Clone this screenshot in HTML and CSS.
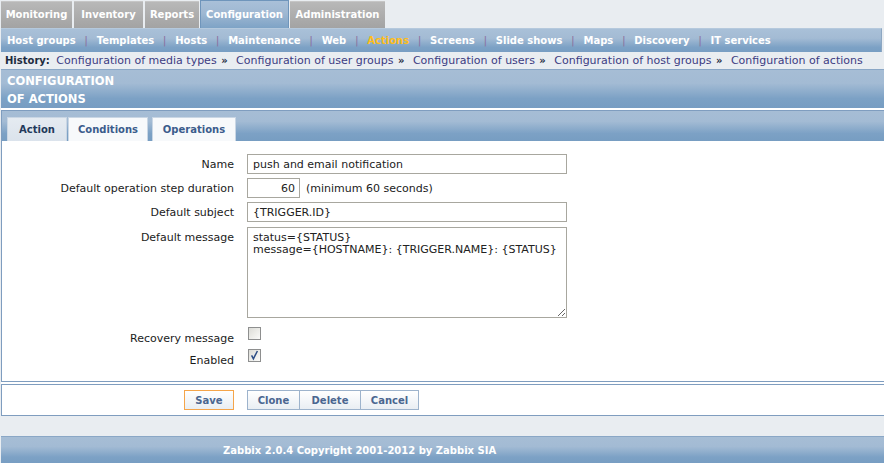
FILE: index.html
```html
<!DOCTYPE html>
<html>
<head>
<meta charset="utf-8">
<title>Configuration of actions</title>
<link rel="stylesheet" href="styles.css">
</head>
<body>
<div class="page">
  <div class="topnav">
    <span class="tab w1">Monitoring</span>
    <span class="tab w2">Inventory</span>
    <span class="tab w3">Reports</span>
    <span class="tab sel w4">Configuration</span>
    <span class="tab w5">Administration</span>
  </div>
  <div class="subnav">
    <span class="item">Host groups</span><span class="sep">|</span>
    <span class="item">Templates</span><span class="sep">|</span>
    <span class="item">Hosts</span><span class="sep">|</span>
    <span class="item">Maintenance</span><span class="sep">|</span>
    <span class="item">Web</span><span class="sep">|</span>
    <span class="item current">Actions</span><span class="sep">|</span>
    <span class="item">Screens</span><span class="sep">|</span>
    <span class="item">Slide shows</span><span class="sep">|</span>
    <span class="item">Maps</span><span class="sep">|</span>
    <span class="item">Discovery</span><span class="sep">|</span>
    <span class="item">IT services</span>
  </div>
  <div class="history">
    <b class="hlabel">History:</b>
    <a class="hlink">Configuration of media types</a><span class="raquo">»</span>
    <a class="hlink">Configuration of user groups</a><span class="raquo">»</span>
    <a class="hlink">Configuration of users</a><span class="raquo">»</span>
    <a class="hlink">Configuration of host groups</a><span class="raquo">»</span>
    <a class="hlink">Configuration of actions</a>
  </div>

  <div class="panel">
    <div class="header">CONFIGURATION<br>OF ACTIONS</div>

    <div class="formbox">
      <div class="tabbar">
        <span class="ftab active t1">Action</span>
        <span class="ftab t2">Conditions</span>
        <span class="ftab t3">Operations</span>
      </div>
      <div class="form">
        <div class="row">
          <div class="label">Name</div>
          <div class="field"><input class="txt wide" type="text" value="push and email notification"></div>
        </div>
        <div class="row">
          <div class="label">Default operation step duration</div>
          <div class="field"><input class="txt short" type="text" value="60"><span class="hint">(minimum 60 seconds)</span></div>
        </div>
        <div class="row">
          <div class="label">Default subject</div>
          <div class="field"><input class="txt wide" type="text" value="{TRIGGER.ID}"></div>
        </div>
        <div class="row top">
          <div class="label">Default message</div>
          <div class="field"><textarea class="area">status={STATUS}
message={HOSTNAME}: {TRIGGER.NAME}: {STATUS}</textarea></div>
        </div>
        <div class="row check">
          <div class="label">Recovery message</div>
          <div class="field"><span class="cb"></span></div>
        </div>
        <div class="row check">
          <div class="label">Enabled</div>
          <div class="field"><span class="cb on"><svg width="11" height="11" viewBox="0 0 11 11"><path d="M2.6 5.4 L4.4 8.8 L8.4 1" fill="none" stroke="#2b4c85" stroke-width="1.5"/></svg></span></div>
        </div>
      </div>
    </div>

    <div class="buttons">
      <div class="bleft"><button class="btn save">Save</button></div>
      <div class="bright">
        <button class="btn grp b1">Clone</button><button class="btn grp b2">Delete</button><button class="btn grp b3">Cancel</button>
      </div>
    </div>
  </div>

  <div class="footer">Zabbix 2.0.4 Copyright 2001-2012 by Zabbix SIA</div>
</div>
</body>
</html>
```

FILE: styles.css
```css
* { box-sizing: border-box; }
html, body { margin: 0; padding: 0; }
body {
  background: #e9edf1;
  font-family: "DejaVu Sans", sans-serif;
  font-size: 11px;
  color: #1b1b1b;
  width: 884px;
  height: 463px;
  overflow: hidden;
}
.page { width: 900px; padding-left: 1px; }

/* top tabs */
.topnav { display: flex; gap: 2px; height: 28px; padding-top: 1px; }
.tab {
  height: 27px;
  line-height: 26px;
  padding: 0;
  text-align: center;
  font-size: 10px;
  font-weight: bold;
  color: #fff;
  background: linear-gradient(#b8b8b8, #a3a3a3);
  border-top: 1px solid #c6c6c6;
}
.w1 { width: 71px; }
.w2 { width: 69px; }
.w3 { width: 54px; }
.w4 { width: 89px; margin-left: -1px; }
.w5 { width: 95px; margin-left: -1px; }
.tab.sel {
  margin-top: -1px;
  height: 28px;
  line-height: 27px;
  border: 1px solid #6f95bb;
  border-bottom: none;
  background: linear-gradient(#a9c0d8 0%, #9fb8d2 45%, #7ea3c6 100%);
}

/* sub navigation */
.subnav {
  width: 881px;
  height: 24px;
  display: flex;
  align-items: center;
  padding-left: 6px;
  background: linear-gradient(#a9c0d8 0%, #a3bbd4 40%, #7ca1c5 80%, #789ec3 100%);
  border-top: 1px solid #b5c9dd;
  border-right: 1px solid #8da7c2;
}
.item { font-size: 10px; font-weight: bold; color: #fff; white-space: nowrap; }
.item.current { color: #ffbe1a; }
.sep {
  display: inline-block;
  width: 21px;
  text-align: center;
  color: #8b72a0;
  font-size: 11px;
}

/* history */
.history {
  height: 17px;
  line-height: 17px;
  padding-left: 4px;
  white-space: nowrap;
  color: #3c3c80;
}
.hlabel { font-size: 10px; color: #1d2b3f; margin-right: 3px; }
.hlink { color: #3c3c82; }
.raquo { color: #1d2b3f; font-weight: bold; font-size: 10px; margin: 0 5px 0 4.5px; }

/* panel */
.panel {
  background: #fff;
  display: flex;
  flex-direction: column;
  gap: 2px;
}
.header {
  height: 39px;
  padding: 2px 6px 0;
  border-top: 1px solid #8aa7c6;
  background: linear-gradient(#a6bdd5 0%, #a3bbd4 35%, #7ca1c5 75%, #779dc2 100%);
  color: #fff;
  font-size: 11.5px;
  font-weight: bold;
  line-height: 18px;
}
.formbox { border: 1px solid #7f9dbf; border-right: none; }
.tabbar {
  height: 30px;
  display: flex;
  align-items: flex-end;
  padding-left: 5px;
  background: linear-gradient(#a6bdd5 0%, #a3bbd4 35%, #7ca1c5 75%, #779dc2 100%);
}
.ftab {
  height: 24px;
  line-height: 24px;
  padding: 0;
  text-align: center;
  font-size: 10px;
  font-weight: bold;
  color: #3b5c8c;
  background: #f7f9fb;
  border: 1px solid #c9d6e4;
  border-bottom: none;
}
.ftab.active { background: linear-gradient(#e5ebf1, #dbe3ec); color: #22395a; }
.t1 { width: 60px; }
.t2 { width: 80px; margin-left: 1px; }
.t3 { width: 84px; margin-left: 4px; }

.form { padding: 13px 0 10px; display: flex; flex-direction: column; gap: 4px; }
.row { display: grid; grid-template-columns: 232px 320px; column-gap: 13px; align-items: center; }
.row.top { align-items: start; margin-top: 1px; }
.row.top .label { padding-top: 4px; }
.row.check { height: 22px; }
.row.check + .row.check { margin-top: -4px; }
.row.check .field { align-self: start; }
.label { text-align: right; white-space: nowrap; }
.field { display: flex; align-items: center; }
.txt {
  height: 20px;
  border: 1px solid #a8a79f;
  padding: 0 5px;
  font-family: "DejaVu Sans", sans-serif;
  font-size: 11px;
  color: #222;
  background: #fff;
  outline: none;
}
.txt.wide { width: 320px; }
.txt.short { width: 53px; text-align: right; padding-right: 4px; }
.hint { margin-left: 6px; white-space: nowrap; }
.area {
  width: 320px;
  height: 91px;
  border: 1px solid #a8a79f;
  padding: 4px 5px;
  font-family: "DejaVu Sans", sans-serif;
  font-size: 11px;
  line-height: 12px;
  color: #222;
  resize: both;
  outline: none;
  display: block;
  margin-bottom: 5px;
}
.cb {
  display: inline-block;
  width: 13px;
  height: 13px;
  margin-left: 1px;
  border: 1px solid #8e8f8f;
  background: linear-gradient(135deg, #dcdcd7, #fbfbf9);
  position: relative;
}
.cb svg { position: absolute; left: 0; top: 0; }

/* buttons */
.buttons {
  height: 32px;
  border-top: 1px solid #7f9dbf;
  border-bottom: 1px solid #7f9dbf;
  border-left: 1px solid #7f9dbf;
  display: grid;
  grid-template-columns: 232px auto;
  column-gap: 13px;
  align-items: start;
  padding-top: 5px;
}
.bleft { text-align: right; }
.bright { display: flex; }
.btn {
  height: 20px;
  padding: 0;
  font-family: "DejaVu Sans", sans-serif;
  font-size: 10px;
  font-weight: bold;
  color: #4a6690;
  background: linear-gradient(#ffffff, #e9eef3);
  border: 1px solid #9db3cc;
  margin: 0;
  text-align: center;
}
.btn.save { border-color: #f5a54a; width: 50px; }
.b1 { width: 53px; }
.b2 { width: 61px; }
.b3 { width: 58px; }
.btn.grp + .btn.grp { border-left: none; }

/* footer */
.footer {
  margin-top: 20px;
  height: 28px;
  line-height: 27px;
  padding-left: 222px;
  border-top: 1px solid #8aa7c6;
  background: linear-gradient(#a6bdd5 0%, #a3bbd4 35%, #7ca1c5 75%, #779dc2 100%);
  color: #fff;
  font-size: 10px;
  font-weight: bold;
  white-space: nowrap;
}
```
